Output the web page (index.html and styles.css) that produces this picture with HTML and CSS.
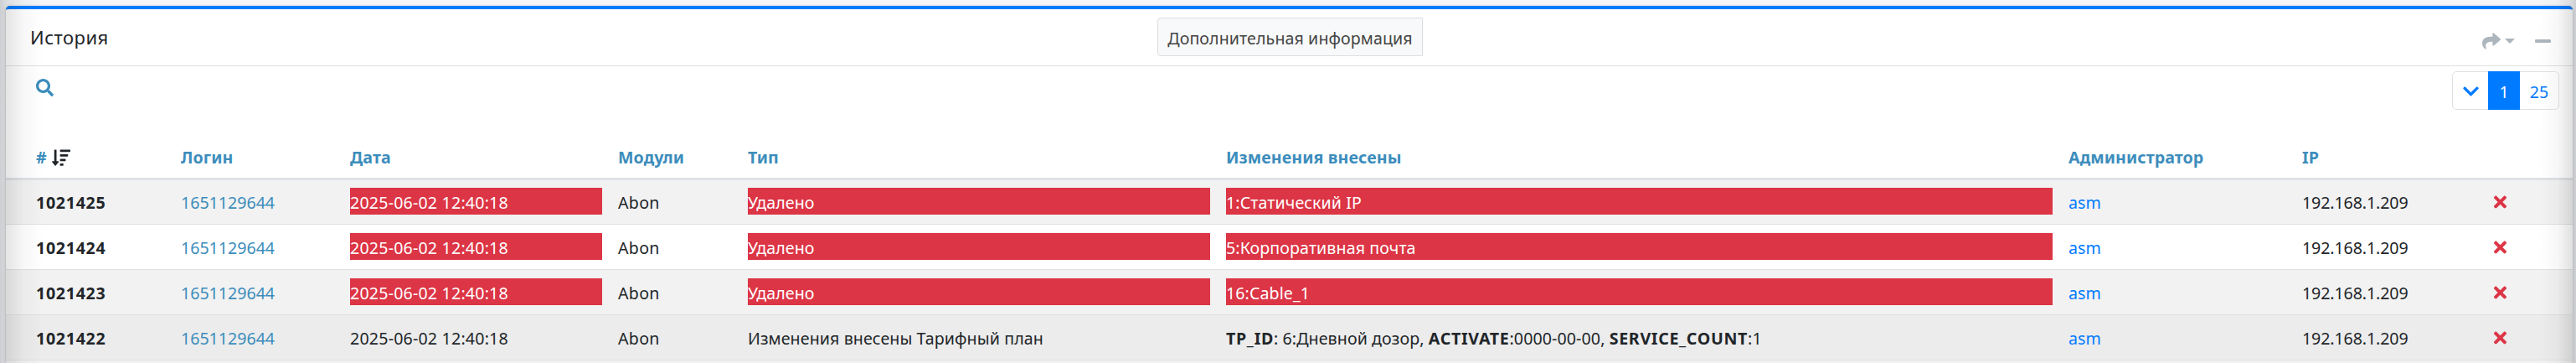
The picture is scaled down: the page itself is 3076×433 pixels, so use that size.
FILE: index.html
```html
<!DOCTYPE html>
<html lang="ru">
<head>
    <meta charset="UTF-8">
    <meta name="viewport" content="width=device-width, initial-scale=1.0">
    <title>История</title>
    <link rel="stylesheet" href="styles.css">
</head>
<body>
    <!-- Иконки -->
    <svg class="sprite">
        <symbol id="icon-search" viewBox="0 0 512 512">
            <path d="M505 442.700 405.300 343c-4.500-4.500-10.600-7-17-7H372c27.600-35.300 44-79.700 44-128C416 93.100 322.900 0 208 0S0 93.100 0 208s93.100 208 208 208c48.300 0 92.700-16.400 128-44v16.300c0 6.400 2.500 12.500 7 17l99.700 99.700c9.400 9.400 24.600 9.400 33.900 0l28.300-28.300c9.400-9.400 9.400-24.600.1-34zM208 336c-70.700 0-128-57.200-128-128 0-70.700 57.200-128 128-128 70.700 0 128 57.200 128 128 0 70.700-57.200 128-128 128z"/>
        </symbol>
        <symbol id="icon-sort" viewBox="0 0 512 512">
            <path d="M240 96h64a16 16 0 0 0 16-16V48a16 16 0 0 0-16-16h-64a16 16 0 0 0-16 16v32a16 16 0 0 0 16 16zm0 128h128a16 16 0 0 0 16-16v-32a16 16 0 0 0-16-16H240a16 16 0 0 0-16 16v32a16 16 0 0 0 16 16zm256 192H240a16 16 0 0 0-16 16v32a16 16 0 0 0 16 16h256a16 16 0 0 0 16-16v-32a16 16 0 0 0-16-16zm-256-64h192a16 16 0 0 0 16-16v-32a16 16 0 0 0-16-16H240a16 16 0 0 0-16 16v32a16 16 0 0 0 16 16z" transform="matrix(1 0 0 -1 0 512)"/>
            <path d="M176 352h-48V48a16 16 0 0 0-16-16H80a16 16 0 0 0-16 16v304H16c-14.200 0-21.400 17.200-11.300 27.300l80 96a16 16 0 0 0 22.600 0l80-96c10-10 3-27.300-11.300-27.300z"/>
        </symbol>
        <symbol id="icon-share" viewBox="0 0 512 512">
            <path d="M503.700 189.800 327.700 37.900C312.300 24.500 288 35.300 288 56v80.100C127.400 137.900 0 170.100 0 322.300c0 61.400 39.600 122.300 83.300 154.100 13.700 9.900 33.100-2.500 28.100-18.600C66.100 312.800 132.900 274.300 288 272v88c0 20.700 24.300 31.500 39.700 18.200l176-152c11.100-9.600 11.100-26.800 0-36.400z"/>
        </symbol>
        <symbol id="icon-minus" viewBox="0 0 448 512">
            <path d="M416 208H32c-17.700 0-32 14.300-32 32v32c0 17.700 14.300 32 32 32h384c17.700 0 32-14.300 32-32v-32c0-17.700-14.300-32-32-32z"/>
        </symbol>
        <symbol id="icon-chevron" viewBox="0 0 448 512">
            <path d="M207 381.500 12.700 187.100c-9.400-9.400-9.400-24.600 0-33.900l22.700-22.700c9.400-9.400 24.500-9.400 33.900 0L224 284.500l154.700-154c9.400-9.300 24.500-9.300 33.900 0l22.700 22.700c9.400 9.400 9.400 24.600 0 33.900L241 381.500c-9.400 9.400-24.600 9.400-34 0z"/>
        </symbol>
        <symbol id="icon-times" viewBox="0 0 352 512">
            <path d="m242.700 256 100.100-100.100c12.300-12.300 12.300-32.200 0-44.500l-22.200-22.200c-12.300-12.300-32.200-12.300-44.500 0L176 189.300 75.900 89.200c-12.300-12.300-32.200-12.300-44.500 0L9.200 111.500c-12.300 12.300-12.300 32.200 0 44.500L109.300 256 9.200 356.100c-12.300 12.300-12.300 32.200 0 44.500l22.200 22.200c12.300 12.300 32.200 12.300 44.500 0L176 322.700l100.100 100.100c12.300 12.300 32.200 12.300 44.500 0l22.200-22.200c12.300-12.300 12.300-32.200 0-44.500L242.700 256z"/>
        </symbol>
    </svg>

    <div class="card">
        <div class="card-header">
            <h3 class="card-title">История</h3>
            <a class="btn-info">Дополнительная информация</a>
            <div class="card-tools">
                <svg class="icon-share"><use href="#icon-share"/></svg>
                <span class="caret"></span>
                <svg class="icon-minus"><use href="#icon-minus"/></svg>
            </div>
        </div>

        <div class="toolbar">
            <svg class="icon-search"><use href="#icon-search"/></svg>
            <div class="pagination">
                <a class="page"><svg class="icon-chevron"><use href="#icon-chevron"/></svg></a>
                <a class="page active">1</a>
                <a class="page">25</a>
            </div>
        </div>

        <table class="table">
            <colgroup>
                <col class="col-id">
                <col class="col-login">
                <col class="col-date">
                <col class="col-module">
                <col class="col-type">
                <col class="col-changes">
                <col class="col-admin">
                <col class="col-ip">
                <col class="col-del">
            </colgroup>
            <thead>
                <tr>
                    <th>#<svg class="icon-sort"><use href="#icon-sort"/></svg></th>
                    <th>Логин</th>
                    <th>Дата</th>
                    <th>Модули</th>
                    <th>Тип</th>
                    <th>Изменения внесены</th>
                    <th>Администратор</th>
                    <th>IP</th>
                    <th></th>
                </tr>
            </thead>
            <tbody>
                <tr>
                    <td><b>1021425</b></td>
                    <td><a class="login">1651129644</a></td>
                    <td class="date"><div class="danger">2025-06-02 12:40:18</div></td>
                    <td class="module">Abon</td>
                    <td><div class="danger">Удалено</div></td>
                    <td><div class="danger">1:Статический IP</div></td>
                    <td><a class="admin">asm</a></td>
                    <td class="ip">192.168.1.209</td>
                    <td><svg class="icon-times"><use href="#icon-times"/></svg></td>
                </tr>
                <tr>
                    <td><b>1021424</b></td>
                    <td><a class="login">1651129644</a></td>
                    <td class="date"><div class="danger">2025-06-02 12:40:18</div></td>
                    <td class="module">Abon</td>
                    <td><div class="danger">Удалено</div></td>
                    <td><div class="danger">5:Корпоративная почта</div></td>
                    <td><a class="admin">asm</a></td>
                    <td class="ip">192.168.1.209</td>
                    <td><svg class="icon-times"><use href="#icon-times"/></svg></td>
                </tr>
                <tr>
                    <td><b>1021423</b></td>
                    <td><a class="login">1651129644</a></td>
                    <td class="date"><div class="danger">2025-06-02 12:40:18</div></td>
                    <td class="module">Abon</td>
                    <td><div class="danger">Удалено</div></td>
                    <td><div class="danger">16:Cable_1</div></td>
                    <td><a class="admin">asm</a></td>
                    <td class="ip">192.168.1.209</td>
                    <td><svg class="icon-times"><use href="#icon-times"/></svg></td>
                </tr>
                <tr class="current">
                    <td><b>1021422</b></td>
                    <td><a class="login">1651129644</a></td>
                    <td class="date">2025-06-02 12:40:18</td>
                    <td class="module">Abon</td>
                    <td>Изменения внесены Тарифный план</td>
                    <td><b>TP_ID</b>: 6:Дневной дозор, <b>ACTIVATE</b>:0000-00-00, <b>SERVICE_COUNT</b>:1</td>
                    <td><a class="admin">asm</a></td>
                    <td class="ip">192.168.1.209</td>
                    <td><svg class="icon-times"><use href="#icon-times"/></svg></td>
                </tr>
                <tr class="next"><td colspan="9"></td></tr>
            </tbody>
        </table>
    </div>
</body>
</html>
```
FILE: styles.css
```css
* {
    box-sizing: border-box;
}

body {
    margin: 0;
    height: 433px;
    padding: 7px 4px 0 7px;
    overflow: hidden;
    background: #f4f6f9;
    color: #212529;
    font-family: "Segoe UI", "Noto Sans", sans-serif;
    font-size: 19.6px;
    line-height: 30px;
}

/* Тень по краям окна */
body::after {
    content: "";
    position: absolute;
    inset: 0;
    background:
        linear-gradient(to right, rgba(0, 0, 0, 0.16), rgba(0, 0, 0, 0.1) 8px, rgba(0, 0, 0, 0.03) 28px, transparent 52px),
        linear-gradient(to left, rgba(0, 0, 0, 0.16), rgba(0, 0, 0, 0.12) 4px, rgba(0, 0, 0, 0.03) 22px, transparent 44px);
    pointer-events: none;
}

.sprite {
    display: none;
}

svg {
    fill: currentColor;
}

.card {
    height: 426px;
    background: #fff;
    border-top: 4px solid #007bff;
    border-radius: 5px 5px 0 0;
    box-shadow: 0 0 1px rgba(0, 0, 0, 0.25), 0 1px 4px rgba(0, 0, 0, 0.2);
}

.card-header {
    display: grid;
    grid-template-columns: 1fr auto 1fr;
    align-items: start;
    height: 68px;
    padding: 10px 26px 0 28px;
    border-bottom: 1px solid #dfdfdf;
}

.card-title {
    margin: 0;
    padding: 7px 0 0 1px;
    font-size: 22px;
    font-weight: 400;
    letter-spacing: 0.5px;
    line-height: 32px;
}

.btn-info {
    width: 317px;
    height: 46px;
    background: #f8f9fa;
    border: 1px solid #ddd;
    border-radius: 4px 0 0 4px;
    color: #444;
    line-height: 47px;
    letter-spacing: 0.1px;
    text-align: center;
    white-space: nowrap;
}

.card-tools {
    display: flex;
    justify-content: flex-end;
    align-items: center;
    height: 56px;
    color: #adb5bd;
}

.icon-share {
    width: 22px;
    height: 22px;
}

.caret {
    margin-left: 5px;
    border: 6px solid transparent;
    border-top-color: #adb5bd;
    border-bottom: 0;
}

.icon-minus {
    width: 19px;
    height: 22px;
    margin-left: 24px;
}

.toolbar {
    display: flex;
    justify-content: space-between;
    align-items: flex-start;
    height: 85px;
    padding: 6px 16px 0 36px;
}

.icon-search {
    width: 21px;
    height: 21px;
    margin-top: 9px;
    color: #3c8dbc;
}

.pagination {
    display: flex;
    width: 128px;
    height: 46px;
    border: 1px solid #dee2e6;
    border-radius: 5px;
    color: #007bff;
}

.page {
    width: 42px;
    line-height: 47px;
    text-align: center;
}

.page:last-child {
    width: 46px;
}

.page.active {
    width: 38px;
    margin: -1px 0;
    background: #007bff;
    color: #fff;
    line-height: 49px;
}

.icon-chevron {
    width: 19px;
    height: 22px;
    margin-top: 12px;
}

.table {
    width: 3065px;
    table-layout: fixed;
    border-spacing: 0;
}

.col-id { width: 200px; }
.col-login { width: 202px; }
.col-date { width: 320px; }
.col-module { width: 155px; }
.col-type { width: 571px; }
.col-changes { width: 1006px; }
.col-admin { width: 279px; }
.col-ip { width: 228px; }

.table th,
.table td {
    padding: 9px 10px 0 9px;
    text-align: left;
    vertical-align: top;
    white-space: nowrap;
}

.table th:first-child,
.table td:first-child {
    padding-left: 36px;
}

.table th {
    height: 51px;
    border-bottom: 3px solid #dee2e6;
    color: #3c8dbc;
    letter-spacing: 0.1px;
}

.table td {
    height: 54px;
    padding-top: 10px;
    border-bottom: 1px solid #dee2e6;
    letter-spacing: 0.1px;
    line-height: 36px;
}

.table tbody tr:first-child td {
    height: 53px;
    padding-top: 9px;
}

.table tbody tr:nth-child(odd) {
    background: #f2f2f2;
}

.table tbody tr.current {
    background: #ececec;
}

/* Начало следующей строки у нижнего края */
.table tbody tr.next td {
    height: 3px;
    padding: 0;
    border: 0;
}

.table b {
    font-weight: 700;
    letter-spacing: 0.7px;
}

.table .date {
    letter-spacing: 0.2px;
}

.table .module {
    letter-spacing: 0.3px;
}

.table .ip {
    letter-spacing: -0.1px;
}

.danger {
    height: 32px;
    background: #dc3545;
    color: #fff;
    line-height: 36px;
}

.login {
    color: #3c8dbc;
    letter-spacing: 0;
}

.admin {
    color: #007bff;
}

.icon-sort {
    width: 22px;
    height: 22px;
    margin-left: 6px;
    color: #212529;
    vertical-align: -4px;
}

.icon-times {
    width: 15px;
    height: 22px;
    margin: 6px 0 0 1px;
    color: #dc3545;
    display: block;
}
```
